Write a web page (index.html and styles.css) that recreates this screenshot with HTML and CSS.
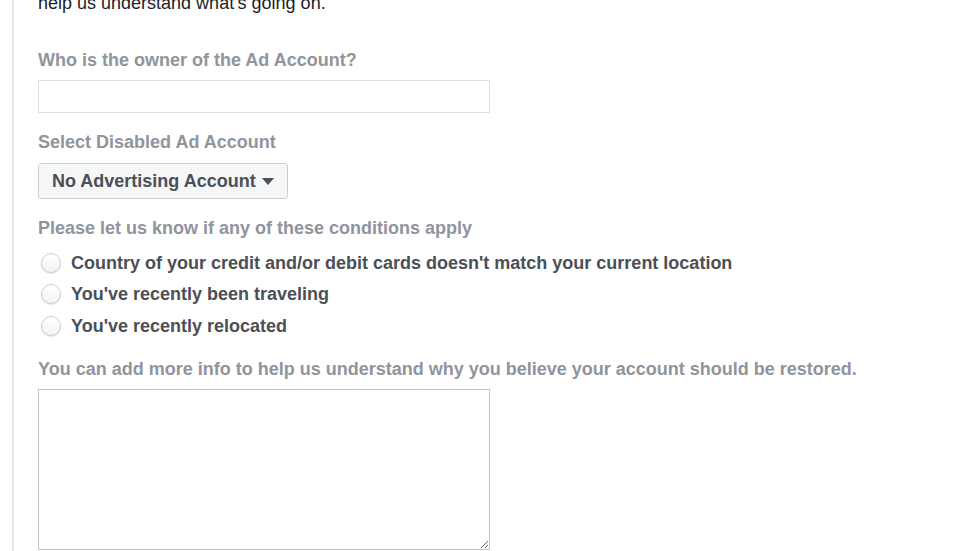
FILE: index.html
```html
<!DOCTYPE html>
<html lang="en">
<head>
<meta charset="utf-8">
<title>Disabled Ad Account</title>
<link rel="stylesheet" href="styles.css">
</head>
<body>
<div class="card">
  <p class="intro">help us understand what's going on.</p>

  <div class="field field-first">
    <label class="label" for="owner">Who is the owner of the Ad Account?</label>
    <input class="text-input" id="owner" type="text">
  </div>

  <div class="field">
    <div class="label">Select Disabled Ad Account</div>
    <button class="select-btn" type="button">
      <span>No Advertising Account</span>
      <span class="caret"></span>
    </button>
  </div>

  <div class="field">
    <div class="label">Please let us know if any of these conditions apply</div>
    <div class="radios">
      <label class="radio-row"><span class="radio"></span><span>Country of your credit and/or debit cards doesn't match your current location</span></label>
      <label class="radio-row"><span class="radio"></span><span>You've recently been traveling</span></label>
      <label class="radio-row"><span class="radio"></span><span>You've recently relocated</span></label>
    </div>
  </div>

  <div class="field field-more">
    <label class="label" for="info">You can add more info to help us understand why you believe your account should be restored.</label>
    <textarea class="text-area" id="info"></textarea>
  </div>
</div>
</body>
</html>
```

FILE: styles.css
```css
html, body {
  margin: 0;
  padding: 0;
  background: #ffffff;
  overflow: hidden;
}

body {
  font-family: "Liberation Sans", Arial, Helvetica, sans-serif;
  font-size: 18px;
  line-height: 22px;
  color: #1d2129;
}

.card {
  margin-left: 12px;
  width: 948px;
  min-height: 600px;
  border-left: 2px solid #e3e5e8;
  border-right: 2px solid #e3e5e8;
  padding: 0 0 0 24px;
  box-sizing: content-box;
}

.intro {
  margin: -8px 0 0;
  color: #1d2129;
}

.field {
  display: flex;
  flex-direction: column;
  align-items: flex-start;
  margin-top: 18px;
}

.field-first {
  margin-top: 35px;
}

.label {
  display: block;
  font-weight: bold;
  color: #90949c;
  margin-bottom: 9px;
}

.text-input {
  width: 452px;
  height: 33px;
  box-sizing: border-box;
  border: 1px solid #dddfe2;
  border-radius: 0;
  margin: 0;
  padding: 0 8px;
  font: inherit;
  outline: none;
}

.select-btn {
  display: flex;
  align-items: center;
  gap: 6px;
  height: 36px;
  box-sizing: border-box;
  margin: 1px 0 0;
  padding: 0 13px;
  background: #f5f6f7;
  border: 1px solid #ccd0d5;
  border-radius: 3px;
  font-family: inherit;
  font-size: 18px;
  font-weight: bold;
  color: #4b4f56;
  line-height: 22px;
}

.caret {
  width: 0;
  height: 0;
  border-left: 6px solid transparent;
  border-right: 6px solid transparent;
  border-top: 7px solid #4b4f56;
  margin-top: 1px;
}

.radios {
  display: flex;
  flex-direction: column;
  margin-top: -1px;
}

.radio-row {
  display: flex;
  align-items: center;
  gap: 10px;
  height: 31px;
  font-weight: bold;
  color: #4b4f56;
}

.radio-row + .radio-row {
  margin-top: 0.5px;
}

.radio {
  width: 20px;
  height: 20px;
  box-sizing: border-box;
  margin-left: 3px;
  border-radius: 50%;
  border: 1px solid #c9ccd1;
  background: linear-gradient(#ffffff, #f2f3f5);
  box-shadow: 0 1px 1px rgba(0, 0, 0, 0.12);
}

.field-more {
  margin-top: 17px;
}

.text-area {
  width: 452px;
  height: 161px;
  box-sizing: border-box;
  margin: 0;
  border: 1px solid #bec3c9;
  border-radius: 0;
  padding: 6px;
  font: inherit;
  resize: both;
  outline: none;
}
```
